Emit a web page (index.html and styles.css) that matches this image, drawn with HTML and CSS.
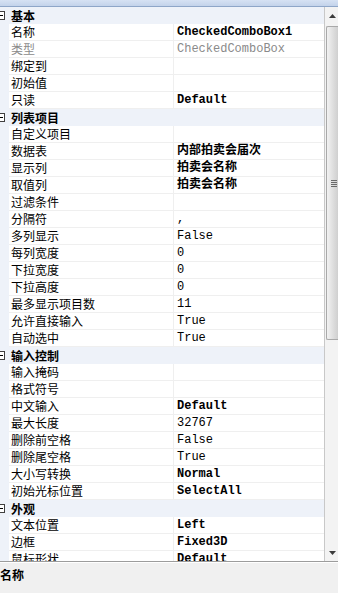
FILE: index.html
```html
<!DOCTYPE html>
<html lang="zh-CN">
<head>
    <meta charset="UTF-8">
    <title>属性</title>
    <link rel="stylesheet" href="styles.css">
</head>
<body>
    <div class="topbar"></div>

    <div class="grid">
        <div class="rows">
            <!-- 基本 -->
            <div class="cat"><span class="exp"></span><span class="cat-name">基本</span></div>
            <div class="prop"><span class="name">名称</span><span class="val b">CheckedComboBox1</span></div>
            <div class="prop ro"><span class="name">类型</span><span class="val">CheckedComboBox</span></div>
            <div class="prop"><span class="name">绑定到</span><span class="val"></span></div>
            <div class="prop"><span class="name">初始值</span><span class="val"></span></div>
            <div class="prop"><span class="name">只读</span><span class="val b">Default</span></div>

            <!-- 列表项目 -->
            <div class="cat"><span class="exp"></span><span class="cat-name">列表项目</span></div>
            <div class="prop"><span class="name">自定义项目</span><span class="val"></span></div>
            <div class="prop"><span class="name">数据表</span><span class="val b">内部拍卖会届次</span></div>
            <div class="prop"><span class="name">显示列</span><span class="val b">拍卖会名称</span></div>
            <div class="prop"><span class="name">取值列</span><span class="val b">拍卖会名称</span></div>
            <div class="prop"><span class="name">过滤条件</span><span class="val"></span></div>
            <div class="prop"><span class="name">分隔符</span><span class="val">,</span></div>
            <div class="prop"><span class="name">多列显示</span><span class="val">False</span></div>
            <div class="prop"><span class="name">每列宽度</span><span class="val">0</span></div>
            <div class="prop"><span class="name">下拉宽度</span><span class="val">0</span></div>
            <div class="prop"><span class="name">下拉高度</span><span class="val">0</span></div>
            <div class="prop"><span class="name">最多显示项目数</span><span class="val">11</span></div>
            <div class="prop"><span class="name">允许直接输入</span><span class="val">True</span></div>
            <div class="prop"><span class="name">自动选中</span><span class="val">True</span></div>

            <!-- 输入控制 -->
            <div class="cat"><span class="exp"></span><span class="cat-name">输入控制</span></div>
            <div class="prop"><span class="name">输入掩码</span><span class="val"></span></div>
            <div class="prop"><span class="name">格式符号</span><span class="val"></span></div>
            <div class="prop"><span class="name">中文输入</span><span class="val b">Default</span></div>
            <div class="prop"><span class="name">最大长度</span><span class="val">32767</span></div>
            <div class="prop"><span class="name">删除前空格</span><span class="val">False</span></div>
            <div class="prop"><span class="name">删除尾空格</span><span class="val">True</span></div>
            <div class="prop"><span class="name">大小写转换</span><span class="val b">Normal</span></div>
            <div class="prop"><span class="name">初始光标位置</span><span class="val b">SelectAll</span></div>

            <!-- 外观 -->
            <div class="cat"><span class="exp"></span><span class="cat-name">外观</span></div>
            <div class="prop"><span class="name">文本位置</span><span class="val b">Left</span></div>
            <div class="prop"><span class="name">边框</span><span class="val b">Fixed3D</span></div>
            <div class="prop"><span class="name">鼠标形状</span><span class="val b">Default</span></div>
        </div>

        <div class="scrollbar">
            <div class="arrow">
                <svg width="7" height="4" viewBox="0 0 7 4"><path d="M0 4 L3.5 0 L7 4 Z" fill="#3c3c3c"/></svg>
            </div>
            <div class="track">
                <div class="thumb">
                    <span class="grip"></span><span class="grip"></span><span class="grip"></span><span class="grip"></span>
                </div>
            </div>
            <div class="arrow">
                <svg width="7" height="4" viewBox="0 0 7 4"><path d="M0 0 L3.5 4 L7 0 Z" fill="#3c3c3c"/></svg>
            </div>
        </div>
    </div>

    <div class="desc">
        <div class="desc-title">名称</div>
    </div>
</body>
</html>
```

FILE: styles.css
```css
body {
    margin: 0;
    width: 338px;
    height: 593px;
    overflow: hidden;
    font-family: "Noto Sans CJK SC", sans-serif;
    font-size: 12px;
    color: #000;
    background: #f0f0f0;
}

.topbar {
    height: 6px;
    background: linear-gradient(#d6e2f3, #c3d3ea);
    border-bottom: 1px solid #8ea6c8;
}

.grid {
    display: flex;
    height: 554px;
    background: #fff;
    border-bottom: 1px solid #9c9c9c;
}

.rows {
    width: 324px;
    overflow: hidden;
    border-right: 1px solid #c8c8c8;
}

/* category row */
.cat {
    display: flex;
    align-items: center;
    height: 17px;
    background: #eef2f9;
}

.exp {
    position: relative;
    width: 9px;
    height: 9px;
    margin-left: -4px;
    margin-right: 6px;
    border: 1px solid #404040;
    box-sizing: border-box;
    background: #fff;
}

.exp::after {
    content: "";
    position: absolute;
    left: 1px;
    right: 1px;
    top: 3px;
    height: 1px;
    background: #000;
}

.cat-name {
    font-weight: bold;
    line-height: 17px;
}

/* property row */
.prop {
    display: flex;
    height: 17px;
    border-left: 9px solid #eef2f9;
}

.name, .val {
    box-sizing: border-box;
    height: 17px;
    line-height: 16px;
    border-bottom: 1px solid #efefef;
    white-space: nowrap;
    overflow: hidden;
}

.name {
    width: 165px;
    padding-left: 2px;
    border-right: 1px solid #efefef;
}

.val {
    flex: 1;
    padding-left: 3px;
    font-family: "Liberation Mono", "Noto Sans CJK SC", monospace;
}

.val.b {
    font-weight: bold;
}

.prop.ro .name,
.prop.ro .val {
    color: #8a8a8a;
}

/* scrollbar */
.scrollbar {
    width: 13px;
    display: flex;
    flex-direction: column;
    background: #f3f3f3;
}

.arrow {
    height: 17px;
    display: flex;
    align-items: center;
    justify-content: center;
    padding-left: 2px;
}

.track {
    flex: 1;
    padding-top: 2px;
}

.thumb {
    margin-left: 1px;
    height: 312px;
    border: 1px solid #a9a9a9;
    border-right: none;
    border-radius: 2px 0 0 2px;
    background: linear-gradient(90deg, #f2f2f2, #dcdcdc 60%, #cfcfcf);
    display: flex;
    flex-direction: column;
    justify-content: center;
    align-items: center;
    gap: 1px;
}

.grip {
    width: 6px;
    height: 1px;
    background: #6a6a6a;
    margin-left: 2px;
}

/* description pane */
.desc {
    height: 31px;
    border-top: 1px solid #fff;
    background: #f0f0f0;
    padding-top: 3px;
    box-sizing: border-box;
}

.desc-title {
    font-weight: bold;
    line-height: 18px;
}
```
